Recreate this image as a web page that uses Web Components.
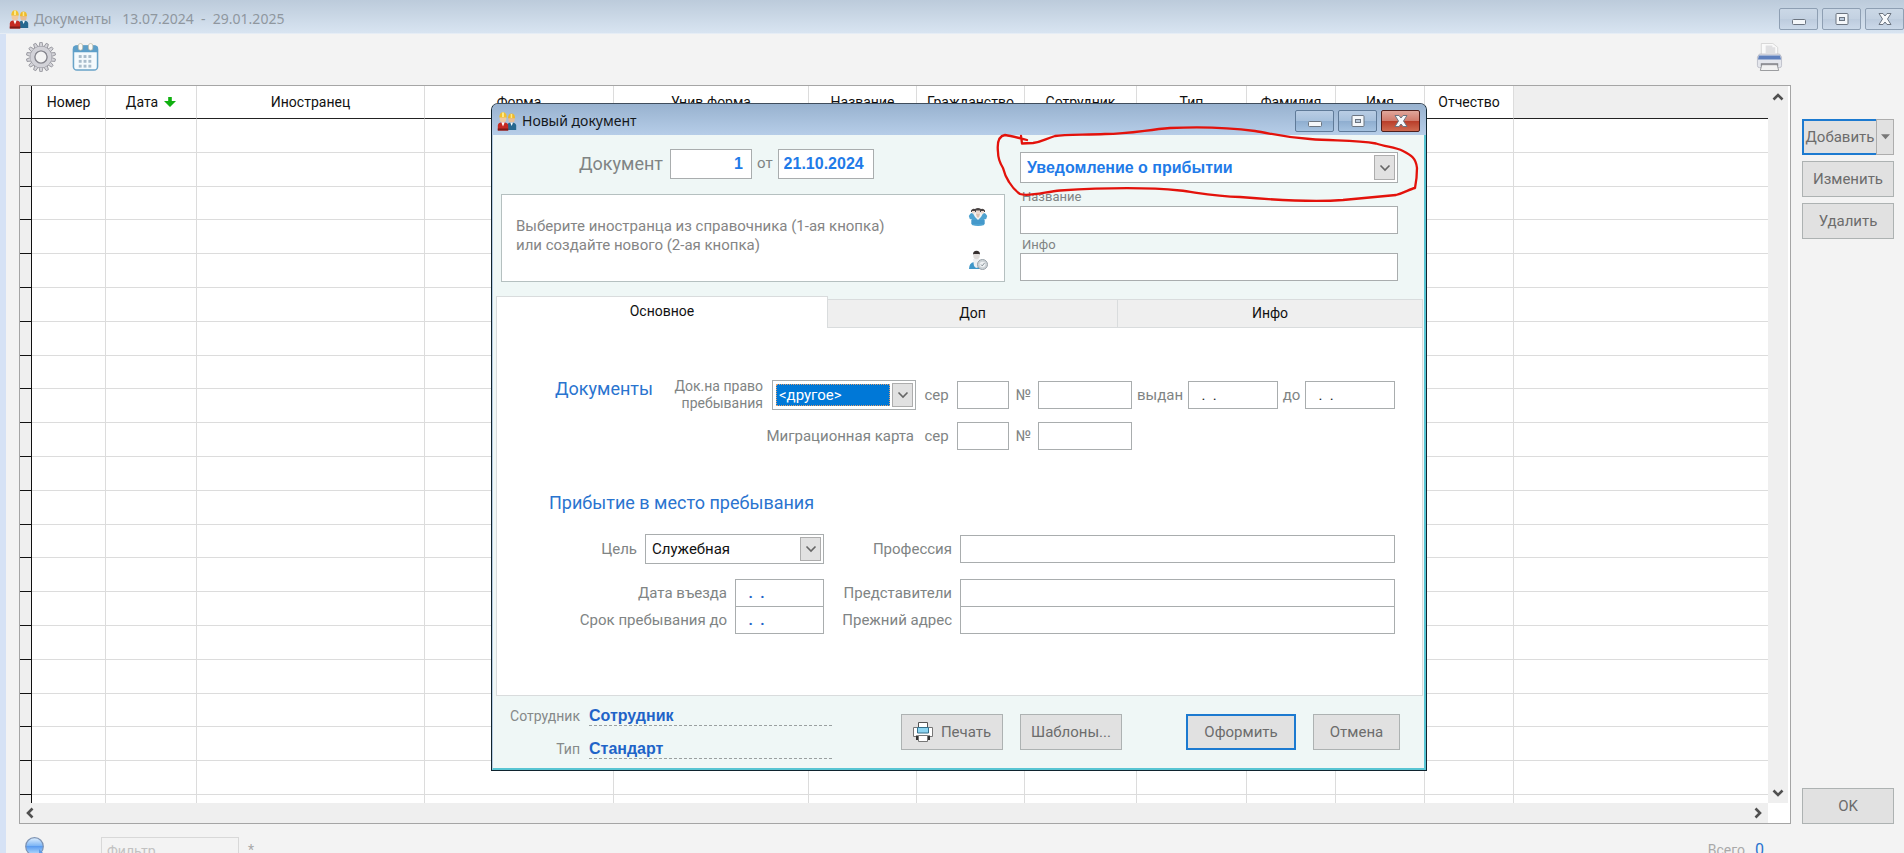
<!DOCTYPE html>
<html lang="ru">
<head>
<meta charset="utf-8">
<title>Документы</title>
<style>
html, body { margin: 0; height: 100%; overflow: hidden; }
body { font-family: Roboto, "Liberation Sans", sans-serif; font-size: 15px; color: #1a1a1a; background: #f3f3f3; }
</style>
</head>
<body>
<docs-app></docs-app>

<script>
class Base extends HTMLElement {
  constructor() {
    super();
    this.attachShadow({ mode: 'open' });
  }
  connectedCallback() {
    this.shadowRoot.innerHTML = '<style>*,*::before,*::after{box-sizing:border-box}' + this.css() + '</style>' + this.html();
  }
  css() { return ''; }
  html() { return '<slot></slot>'; }
}

const ICONS = {
  people: ['0 0 20 20', `
    <circle cx="6" cy="8" r="3.4" fill="#efc9a0"/><circle cx="14.500" cy="8.600" r="3.200" fill="#e8bd94"/>
    <path d="M2.300 6.500C2.300 2.800 4 1.200 6 1.200S9.800 2.800 9.800 6.500Z" fill="#f2c12e"/><path d="M5 1.600h2v4.500H5z" fill="#fbe98c"/>
    <path d="M11 7.200C11 4 12.500 2.600 14.500 2.600S18 4 18 7.200Z" fill="#efb92a"/><path d="M13.700 3h1.500v4h-1.500z" fill="#fbe98c"/>
    <path d="M10 19v-4.500c0-2 2-3 4.500-3s4.700 1 4.700 3V19Z" fill="#27688f"/><path d="M13.200 11.600h2.800l-1.300 3.400Z" fill="#fff"/>
    <path d="M.8 19.500v-5c0-2.200 2-3.300 5-3.300s5.400 1.100 5.400 3.300v5Z" fill="#c62a22"/><path d="M4.300 11.300h3.400L6 15.500Z" fill="#fff"/>
    <path d="M.8 17.500h10.400v2H.8z" fill="#7d1a18"/>`],
  gear: ['0 0 30 30', (() => {
    let t = '';
    for (let i = 0; i < 14; i++) t += `<path d="M13 5.500L13.800.4h2.400L17 5.500Z" transform="rotate(${i * 360 / 14} 15 15)" fill="#d4d4d9" stroke="#8f8f97" stroke-width=".8"/>`;
    return t + `<circle cx="15" cy="15" r="8.400" fill="none" stroke="#96969e" stroke-width="5"/><circle cx="15" cy="15" r="8.600" fill="none" stroke="#d2d2d8" stroke-width="4"/>
      <circle cx="15" cy="15" r="6" fill="#f3f3f3" stroke="#85858d" stroke-width="1.200"/>`;
  })()],
  calendar: ['0 0 28 30', (() => {
    let t = '';
    for (let y = 0; y < 3; y++) for (let x = 0; x < 3; x++) t += `<rect x="${7 + x * 5}" y="${13 + y * 5}" width="3" height="3" fill="#a9bccb"/>`;
    return `<rect x="1.500" y="3.500" width="25" height="25" rx="3.500" fill="#f4fafd" stroke="#68a3c8" stroke-width="1.600"/>
      <path d="M1 10V6.500Q1 3 4.500 3h19Q27 3 27 6.500V10Z" fill="#5d9fc9"/>
      <rect x="6.500" y="1" width="4.600" height="7" rx="2.300" fill="#fbfbf6" stroke="#b9b39c" stroke-width=".7"/>
      <rect x="17" y="1" width="4.600" height="7" rx="2.300" fill="#fbfbf6" stroke="#b9b39c" stroke-width=".7"/>` + t;
  })()],
  printer: ['0 0 28 30', `
    <path d="M5.500 1h12l5 4v8h-17z" fill="#fafafa" stroke="#cfcfcf" stroke-width=".8"/>
    <path d="M10 3h7v2h3v6H10z" fill="#e0e0e2"/>
    <path d="M3.500 12h21l2 3v9q0 2-2 2h-21q-2 0-2-2v-9z" fill="#e4e6ec" stroke="#b3b6c0" stroke-width=".8"/>
    <path d="M3 13.500h22l1 4H2z" fill="#5f80bd"/>
    <path d="M5 21.500h18v3H5z" fill="#7d7f84"/>
    <path d="M6 23h16l1.500 6h-19z" fill="#f2f2f2" stroke="#8e8f92" stroke-width=".9"/>`],
  print: ['0 0 20 20', `
    <path d="M5.500.5h9v5h-9z" fill="#fff" stroke="#555"/>
    <path d="M.5 5.500h19v9H.500z" fill="#fff" stroke="#777"/>
    <path d="M4.500 5.500h11v5.500h-11z" fill="#8dd5f2" stroke="#35718c"/>
    <path d="M3 13.500h14v4.500H3z" fill="#333"/>
    <path d="M5.500 13.500h9v6h-9z" fill="#fff" stroke="#777"/>`],
  group: ['0 0 20 20', `
    <path d="M.8 9q1-3 4-3.500h10.400q3 .500 4 3.500l-1 3-2 .5V18q-6 2-12.400 0v-5.500L1.800 12Z" fill="#4fa3d1"/>
    <path d="M3 13h14v4H3z" fill="#3d93c6" opacity=".6"/>
    <path d="M4.500 5.500L7 10l3 3 3-3 2.500-4.500Z" fill="#f6f4f3"/><path d="M8 7h4l-1 3.500H9Z" fill="#dcc1b2"/>
    <path d="M3 3.500Q4.500 1 7 2q3-2 6 0 2.500-1 4 1.500V5H3Z" fill="#4a4343"/>
    <path d="M4 4h3v2.500H4zM13 4h3v2.500h-3zM8 3.500h4V7H8z" fill="#ecdad0"/>`],
  user: ['0 0 20 20', `
    <path d="M1 19q0-6 5-7h5q4 1 4 7Z" fill="#3f97c9"/><path d="M5 9h7l-1 8-3 1-2-2Z" fill="#eef0f2"/>
    <circle cx="8.500" cy="6" r="3.200" fill="#e0dcda"/><path d="M5 4.500Q5 .8 8.500.800T12 4.500L11 4H6Z" fill="#37302f"/>
    <circle cx="14.500" cy="14.500" r="5" fill="#cdd3d7" stroke="#9aa2a9"/><circle cx="14.500" cy="14.500" r="2.800" fill="#eef1f3"/>
    <path d="M13 14.500l1.200 1.400L16.500 13" stroke="#8a949b" fill="none"/>`],
  orb: ['0 0 20 20', `
    <defs><linearGradient id="g" x2="0" y2="1"><stop offset="0" stop-color="#dff0ff"/><stop offset=".45" stop-color="#7fb6f5"/><stop offset=".5" stop-color="#5b9cf0"/><stop offset="1" stop-color="#bfe3ff"/></linearGradient></defs>
    <circle cx="9.500" cy="9.500" r="8.800" fill="url(#g)" stroke="#7d93b3" stroke-width="1.200"/>
    <path d="M14 12l5 5v3h-5z" fill="#5c9ae8"/>`],
  sort: ['0 0 12 10', `<path d="M4.200 0h3.600v4H12L6 10 0 4h4.200z" fill="#10b010"/>`],
  down: ['0 0 12 8', `<path d="M1.500 1.500L6 6l4.500-4.500" fill="none" stroke="#666" stroke-width="1.600"/>`],
  drop: ['0 0 10 6', `<path d="M0 0h10L5 5.500z" fill="#777"/>`],
  up: ['0 0 12 10', `<path d="M1.500 7.500L6 3l4.500 4.500" fill="none" stroke="#505050" stroke-width="2.600"/>`],
  dn: ['0 0 12 10', `<path d="M1.500 2.500L6 7l4.500-4.500" fill="none" stroke="#505050" stroke-width="2.600"/>`],
  lt: ['0 0 10 12', `<path d="M7.500 1.500L3 6l4.500 4.500" fill="none" stroke="#505050" stroke-width="2.600"/>`],
  rt: ['0 0 10 12', `<path d="M2.500 1.500L7 6l-4.500 4.500" fill="none" stroke="#505050" stroke-width="2.600"/>`],
  min: ['0 0 16 14', `<rect x="1.500" y="7.500" width="13" height="5" rx="1" fill="#f4f7fa" stroke="#6b7480"/>`],
  max: ['0 0 16 14', `<rect x="2" y="1.500" width="12" height="11" rx="1" fill="#f4f7fa" stroke="#6b7480"/><rect x="5.500" y="5.500" width="5" height="3" fill="#bccbdc" stroke="#6b7480"/>`],
  close: ['0 0 16 14', `<path d="M2 1.500h4L8 4l2-2.500h4L10.500 7l3.500 5.500h-4L8 10l-2 2.500H2L5.500 7Z" fill="#f7f9fb" stroke="#6b7480"/>`]
};

class UiIcon extends Base {
  css() { return ':host{display:inline-block;flex:none;line-height:0;width:20px;height:20px}svg{width:100%;height:100%}'; }
  html() {
    const [box, art] = ICONS[this.getAttribute('name')];
    return `<svg viewBox="${box}" aria-hidden="true">${art}</svg>`;
  }
}
customElements.define('ui-icon', UiIcon);

class TitleBar extends Base {
  css() {
    return `
    :host{display:flex;align-items:center;flex:none;height:34px;padding:4px 0 0 9px;background:linear-gradient(#bccbdb,#d8e4f1);color:#8f979f;
      font-family:"Noto Sans","Open Sans",sans-serif;font-size:14px;border-bottom:1px solid #e6edf5;box-sizing:border-box}
    :host([active]){height:31px;padding:2px 6px 0 5px;background:linear-gradient(#98b2cf,#b6cde8);color:#14181c;border:0;border-radius:6px 6px 0 0}
    ui-icon{margin-right:5px}
    h1{margin:0;flex:1;font:inherit;white-space:pre}
    div{display:flex;gap:4px}
    button{width:39px;height:22px;padding:0;border:1px solid #8e9fb3;border-radius:2px;background:linear-gradient(#cbd8e6,#c3d1e1 50%,#bccbdd 50%,#cbd9e9);display:grid;place-items:center}
    button ui-icon{width:16px;height:14px;margin:0}
    :host([active]) button{border-color:#5f7a98;background:linear-gradient(#b9cde4,#a6c0dc 50%,#8eadcf 50%,#a5c2e0)}
    :host([active]) .x{border-color:#4e1f1c;background:linear-gradient(#e0a69b,#d17a6b 50%,#b83c28 50%,#cf6a50)}`;
  }
  html() {
    return `<ui-icon name="people"></ui-icon><h1><slot></slot></h1><div>
      <button aria-label="Свернуть"><ui-icon name="min"></ui-icon></button>
      <button aria-label="Развернуть"><ui-icon name="max"></ui-icon></button>
      <button class="x" aria-label="Закрыть"><ui-icon name="close"></ui-icon></button></div>`;
  }
}
customElements.define('title-bar', TitleBar);

class UiButton extends Base {
  css() {
    return `:host{display:block}
    button{display:flex;align-items:center;justify-content:center;gap:8px;width:100%;height:36px;padding:0;font:inherit;color:#6c6c6c;background:#e1e1e1;border:1px solid #adb2b2;white-space:nowrap}
    :host([primary]) button{border:2px solid #1c7ad0}`;
  }
  html() { return '<button><slot></slot></button>'; }
}
customElements.define('ui-button', UiButton);

class SplitButton extends Base {
  css() {
    return `:host{display:flex}
    button{height:36px;padding:0;font:inherit;color:#6c6c6c;background:#e1e1e1}
    .m{flex:1;border:2px solid #1c7ad0;border-right:0}
    .d{width:18px;border:1px solid #adadad;display:grid;place-items:center}
    ui-icon{width:9px;height:6px}`;
  }
  html() { return '<button class="m"><slot></slot></button><button class="d" aria-label="Ещё"><ui-icon name="drop"></ui-icon></button>'; }
}
customElements.define('split-button', SplitButton);

class DocsGrid extends Base {
  css() {
    return `
    :host{display:grid;grid-template:minmax(0,1fr) 20px / minmax(0,1fr) 20px;background:#fff;border:1px solid #a5a5a5;padding-right:2px}
    .view{overflow:hidden}
    table{width:100%;table-layout:fixed;border-collapse:separate;border-spacing:0}
    th,td{padding:0;border-right:1px solid #dcdcdc;border-bottom:1px solid #dcdcdc;height:34px}
    tbody tr:nth-child(5n+3) td,thead th{height:33px}
    thead th{font-size:14px;font-weight:400;color:#111;border-bottom-color:#222;background:#fff}
    th ui-icon{width:12px;height:10px;margin-left:6px}
    tr>:first-child{background:#efefef;border-right-color:#111;border-bottom-color:#111}
    tr>:last-child{border-right:0}
    thead th:last-child{background:#efefef}
    .v,.h{background:#efefef;display:flex;justify-content:space-between;align-items:center}
    .v{flex-direction:column;padding:6px 0 5px}
    .h{padding:0 5px 0 5px}
    .v ui-icon{width:12px;height:10px}.h ui-icon{width:10px;height:12px}`;
  }
  html() {
    const cols = [['Номер', 74], ['Дата', 91], ['Иностранец', 228], ['Форма', 189], ['Унив.форма', 195], ['Название', 108], ['Гражданство', 108], ['Сотрудник', 112], ['Тип', 110], ['Фамилия', 89], ['Имя', 89], ['Отчество', 89]];
    const row = '<tr>' + '<td></td>'.repeat(cols.length + 2) + '</tr>';
    return `<div class="view"><table>
      <colgroup><col style="width:12px">${cols.map(c => `<col style="width:${c[1]}px">`).join('')}<col></colgroup>
      <thead><tr><th></th>${cols.map(c => `<th scope="col">${c[0]}${c[0] === 'Дата' ? '<ui-icon name="sort"></ui-icon>' : ''}</th>`).join('')}<th></th></tr></thead>
      <tbody>${row.repeat(21)}</tbody></table></div>
      <div class="v"><ui-icon name="up"></ui-icon><ui-icon name="dn"></ui-icon></div>
      <div class="h"><ui-icon name="lt"></ui-icon><ui-icon name="rt"></ui-icon></div>`;
  }
}
customElements.define('docs-grid', DocsGrid);

const FIELD_CSS = `
  input{width:100%;min-width:0;height:28px;margin:0;padding:0 5px;border:1px solid #a9adae;border-radius:0;background:#fff;font:inherit;color:#222;outline:0}
  .sel{display:flex;height:30px;padding:2px;border:1px solid #a9adae;background:#fff}
  select{appearance:none;flex:1;min-width:0;margin:0;padding:0 4px;border:0;border-radius:0;background:none;font:inherit;color:#111;outline:0}
  .sel i{flex:none;width:21px;border:1px solid #adadad;background:#e1e1e1;display:grid;place-items:center}
  .sel ui-icon{width:12px;height:8px}
  label{color:#808484;white-space:nowrap}`;

class DocHeader extends Base {
  css() {
    return FIELD_CSS + `
    :host{display:grid;grid-template-columns:504px minmax(0,1fr);column-gap:15px;padding:14px 26px 14px 8px}
    .num{display:flex;align-items:center;gap:5px;padding-left:78px;margin-bottom:15px}
    .num .big{font-size:18px;width:86px}
    .num input{height:30px;font:700 16px "Liberation Sans",sans-serif;color:#1f7be8}
    .num label{padding-bottom:2px}
    .no{width:82px;text-align:right;padding-right:8px}.dt{width:96px}
    .pick{display:flex;align-items:center;justify-content:space-between;height:88px;padding:0 16px 0 14px;border:1px solid #b5c0c0;background:#fff}
    p{margin:0;padding-bottom:4px;line-height:19px;color:#858585}
    .pick div{display:grid;gap:23px}
    .pick button{display:block;padding:0;border:0;background:none;height:20px}
    .right{display:flex;flex-direction:column;padding-top:3px}
    .right .sel{height:31px}
    .right select{font:700 16px "Liberation Sans",sans-serif;color:#1f7be8}
    .right label{font-size:13px;line-height:16px;padding:0 2px}
    .right .first{margin:6px 0 1px}.right .gap{margin-top:3px}`;
  }
  html() {
    return `<div><div class="num"><label class="big" for="no">Документ</label><input class="no" id="no" value="1"><label for="dt">от</label><input class="dt" id="dt" value="21.10.2024"></div>
      <div class="pick"><p>Выберите иностранца из справочника (1-ая кнопка)<br>или создайте нового (2-ая кнопка)</p>
      <div><button aria-label="Справочник"><ui-icon name="group"></ui-icon></button><button aria-label="Новый иностранец"><ui-icon name="user"></ui-icon></button></div></div></div>
      <div class="right"><div class="sel"><select aria-label="Форма"><option>Уведомление о прибытии</option></select><i><ui-icon name="down"></ui-icon></i></div>
      <label class="first" for="nm">Название</label><input id="nm"><label class="gap" for="inf">Инфо</label><input id="inf"></div>`;
  }
}
customElements.define('doc-header', DocHeader);

class DocTabs extends Base {
  css() {
    return `
    :host{display:grid;grid-template-columns:332px 290px minmax(0,1fr);align-items:end}
    button{height:29px;padding:0 0 2px;border:1px solid #d9dcdd;border-left:0;background:#efefef;font:inherit;font-size:14px;color:#111}
    button[aria-selected=true]{height:32px;border:1px solid #d9dcdd;border-bottom:0;background:#fff;padding-bottom:4px}`;
  }
  html() { return '<button role="tab" aria-selected="true">Основное</button><button role="tab">Доп</button><button role="tab">Инфо</button>'; }
  connectedCallback() { this.setAttribute('role', 'tablist'); super.connectedCallback(); }
}
customElements.define('doc-tabs', DocTabs);

class DocForm extends Base {
  css() {
    return FIELD_CSS + `
    :host{display:block;flex:1;padding:50px 27px 0 0;background:#fff;border:1px solid #d9dcdd;border-top:0}
    h2{margin:0;font-size:18px;line-height:24px;font-weight:400;color:#2a74cf;white-space:nowrap}
    .a,.b{display:grid;align-items:center}
    .a{grid-template-columns:275px 144px 41px 52px 29px 94px 56px 90px 27px 90px;row-gap:10px}
    .b{grid-template-columns:148px 90px 89px 136px minmax(0,1fr)}
    .a label{text-align:center}
    .lead{display:flex;justify-content:space-between;padding:0 9px 0 58px}
    .lead h2{line-height:22px}
    .a .lead label{font-size:14px;line-height:17px;text-align:right;white-space:pre-line}
    .a .mig{grid-column:1/3;text-align:right;padding-right:2px}
    .second{margin:41px 0 19px;padding-left:52px}
    .b label{text-align:right;padding-right:8px}
    .b .two{grid-column:1/3}
    .pair{margin-top:15px}
    .pair+.pair{margin-top:-1px}
    .pair .mask{color:#1f64c8;font-weight:700}
    .hot select{background:#0078d7;color:#fff;outline:1px dotted #e0a070;outline-offset:-1px;margin:1px 2px 1px 1px;padding:0 3px}`;
  }
  html() {
    const arrow = '<i><ui-icon name="down"></ui-icon></i>';
    return `
    <div class="a">
      <div class="lead"><h2>Документы</h2><label for="kind">Док.на право
пребывания</label></div>
      <div class="sel hot"><select id="kind"><option>&lt;другое&gt;</option></select>${arrow}</div>
      <label for="s1">сер</label><input id="s1"><label for="n1">№</label><input id="n1">
      <label for="d1">выдан</label><input id="d1" value="  .  ."><label for="d2">до</label><input id="d2" value="  .  .">
      <span class="mig"><label for="s2">Миграционная карта</label></span>
      <label for="s2">сер</label><input id="s2"><label for="n2">№</label><input id="n2">
    </div>
    <h2 class="second">Прибытие в место пребывания</h2>
    <div class="b"><label for="aim">Цель</label><div class="sel" style="grid-column:2/4"><select id="aim"><option>Служебная</option></select>${arrow}</div>
      <label for="prof">Профессия</label><input id="prof"></div>
    <div class="b pair"><label class="two" for="in">Дата въезда</label><input class="mask" id="in" value="  .  ."><label for="rep">Представители</label><input id="rep"></div>
    <div class="b pair"><label class="two" for="till">Срок пребывания до</label><input class="mask" id="till" value="  .  ."><label for="adr">Прежний адрес</label><input id="adr"></div>`;
  }
}
customElements.define('doc-form', DocForm);

class DocFooter extends Base {
  css() {
    return `
    :host{display:flex;align-items:flex-start;height:72px;padding:10px 24px 0 17px;box-sizing:border-box}
    dl{display:grid;grid-template-columns:70px 243px;column-gap:9px;row-gap:13px;margin:0}
    dt{font-size:14px;line-height:20px;color:#858989;text-align:right}
    dd{margin:0;font:700 16px/20px "Liberation Sans",sans-serif;border-bottom:1px dashed #9aa0a0;height:20px}
    a{color:#1f64c8;text-decoration:none}
    nav{display:flex;flex:1;gap:17px;padding:8px 0 0 69px}
    .w{width:102px}.o{width:110px;margin-left:auto}.c{width:87px}
    ui-icon{width:20px;height:20px}`;
  }
  html() {
    return `<dl><dt>Сотрудник</dt><dd><a href="#staff">Сотрудник</a></dd><dt>Тип</dt><dd><a href="#type">Стандарт</a></dd></dl>
      <nav><ui-button class="w"><ui-icon name="print"></ui-icon>Печать</ui-button><ui-button class="w">Шаблоны...</ui-button>
      <ui-button class="o" primary>Оформить</ui-button><ui-button class="c">Отмена</ui-button></nav>`;
  }
}
customElements.define('doc-footer', DocFooter);

class PenMark extends Base {
  css() { return ':host{position:absolute;left:0;top:-1px;width:935px;height:668px;pointer-events:none}svg{width:100%;height:100%}'; }
  html() {
    return `<svg viewBox="492 103 935 668" aria-hidden="true"><path fill="none" stroke="#e3120b" stroke-width="2.300" stroke-linejoin="round" stroke-linecap="round"
      d="M1027 140Q1012 136 1005 135C999 136 997 143 998 152Q998 160 1003 168Q1005 176 1009 182Q1014 190 1020 194C1028 197 1045 192 1060 190.500C1100 188 1145 187 1180 190.500C1200 193 1215 196 1240 197C1275 200 1315 202 1343 200C1365 198 1385 196 1396 195C1404 193 1410 189 1415 188Q1417 178 1417 168C1416 158 1411 155 1403 151C1395 147 1386 147 1376 143.500C1355 140 1335 141 1310 139C1280 137 1270 133 1255 131C1225 127 1190 127 1170 128C1145 130 1130 134 1105 134C1085 135 1065 134 1055 136C1045 139 1042 142 1033 143Q1026 143 1022 143.500L1021 136"/></svg>`;
  }
}
customElements.define('pen-mark', PenMark);

class DocDialog extends Base {
  css() {
    return `
    :host{display:flex;flex-direction:column;width:936px;height:668px;box-sizing:border-box;border:1px solid #10242f;border-top-color:#3f4d5c;border-radius:7px 7px 0 0;background:#b6cde8}
    main{flex:1;display:flex;flex-direction:column;background:#eff7f6;border-left:1px solid #b5cbe0;border-right:2px solid #58c5d3;border-bottom:2px solid #58c5d3}
    section{flex:1;display:flex;flex-direction:column;margin:0 1px 0 3px}`;
  }
  html() {
    return `<title-bar active>Новый документ</title-bar><main><doc-header></doc-header>
      <section><doc-tabs></doc-tabs><doc-form></doc-form></section><doc-footer></doc-footer></main><pen-mark></pen-mark>`;
  }
}
customElements.define('doc-dialog', DocDialog);

class DocsApp extends Base {
  css() {
    return `
    :host{display:flex;flex-direction:column;position:relative;height:100vh;overflow:hidden;background:#f3f3f3}
    .body{flex:1;min-height:0;display:flex;flex-direction:column;border-left:6px solid #d6e2f5}
    .tools{display:flex;align-items:center;height:51px;padding:0 121px 6px 20px;flex:none}
    .tools button{padding:0;border:0;background:none;line-height:0;margin-right:16px}
    .tools .pr{margin:0 0 0 auto}
    .tools ui-icon{width:30px;height:30px}.tools .n{width:27px}
    .mid{flex:1;min-height:0;display:flex;padding-left:13px}
    docs-grid{flex:1;min-width:0}
    aside{flex:none;width:113px;display:flex;flex-direction:column;gap:6px;padding:34px 10px 0 11px}
    .ok{margin-top:auto}
    footer{flex:none;height:29px;display:flex;padding:13px 140px 0 19px;font-size:14px;color:#a9a9a9;line-height:26px}
    footer ui-icon{margin-right:56px}
    input{width:138px;height:28px;padding:0 5px;border:1px solid #d8d8d8;background:none;font:inherit;color:#bbb}
    input::placeholder{color:#c2c2c2}
    .star{margin-left:9px}
    .sum{margin-left:auto}b{margin-left:10px;font-weight:400;font-size:16px;color:#2a74cf}
    doc-dialog{position:absolute;left:491px;top:103px}`;
  }
  html() {
    return `<title-bar>Документы   13.07.2024  -  29.01.2025</title-bar>
    <div class="body">
      <div class="tools"><button aria-label="Настройки"><ui-icon name="gear"></ui-icon></button><button aria-label="Период"><ui-icon class="n" name="calendar"></ui-icon></button>
        <button class="pr" aria-label="Печать"><ui-icon class="n" name="printer"></ui-icon></button></div>
      <div class="mid"><docs-grid></docs-grid>
        <aside><split-button>Добавить</split-button><ui-button>Изменить</ui-button><ui-button>Удалить</ui-button><ui-button class="ok">OK</ui-button></aside></div>
      <footer><ui-icon name="orb"></ui-icon><input aria-label="Фильтр" placeholder="Фильтр"><span class="star">*</span><span class="sum">Всего<b>0</b></span></footer>
    </div><doc-dialog></doc-dialog>`;
  }
}
customElements.define('docs-app', DocsApp);
</script>
</body>
</html>
